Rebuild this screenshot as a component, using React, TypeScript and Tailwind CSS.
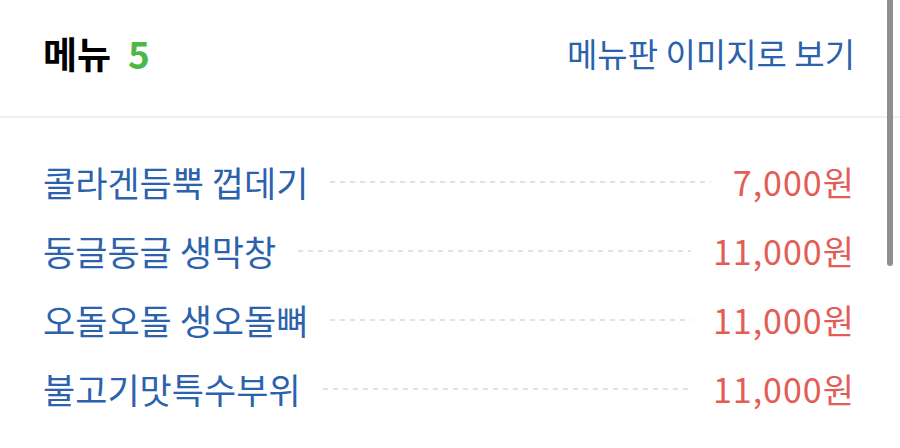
import React from "react";

const MENU_ITEMS = [
    { name: "콜라겐듬뿍 껍데기", price: "7,000원" },
    { name: "동글동글 생막창", price: "11,000원" },
    { name: "오돌오돌 생오돌뼈", price: "11,000원" },
    { name: "불고기맛특수부위", price: "11,000원" },
];

const App = () => {
    return (
        <div
            className="relative w-[900px] h-[448px] overflow-hidden bg-white"
            style={{ fontFamily: '"Noto Sans CJK KR", "Noto Sans", sans-serif' }}
        >
            {/* Header */}
            <div className="h-[116px] flex items-center justify-between pl-[43px] pr-[45px] pb-[10px]">
                <h2 className="flex items-center gap-[17px] text-[37px] font-bold leading-none">
                    <span className="text-black">메뉴</span>
                    <span className="text-[#4db848]">5</span>
                </h2>
                <span className="text-[33px] leading-none text-[#2b62ad]">메뉴판 이미지로 보기</span>
            </div>
            <div className="h-[2px] bg-[#efefef]" />

            {/* Menu list */}
            <ul className="pt-[29px] pl-[43px] pr-[45px]">
                {MENU_ITEMS.map((item) => (
                    <li key={item.name} className="h-[69px] flex items-center">
                        <span className="text-[35px] leading-none text-[#2b62ad] whitespace-nowrap">
                            {item.name}
                        </span>
                        <span className="flex-1 mx-[22px] h-[2px] bg-[repeating-linear-gradient(to_right,#e1e2e8_0_5px,transparent_5px_10px)]" />
                        <span className="text-[34px] leading-none text-[#e35d56] tracking-[1px] whitespace-nowrap">
                            {item.price}
                        </span>
                    </li>
                ))}
            </ul>

            {/* Scrollbar overlay */}
            <div className="absolute right-[7px] top-0 w-[6px] h-[266px] rounded-b-full bg-[#8f8f8f]" />
        </div>
    );
};

export default App;
